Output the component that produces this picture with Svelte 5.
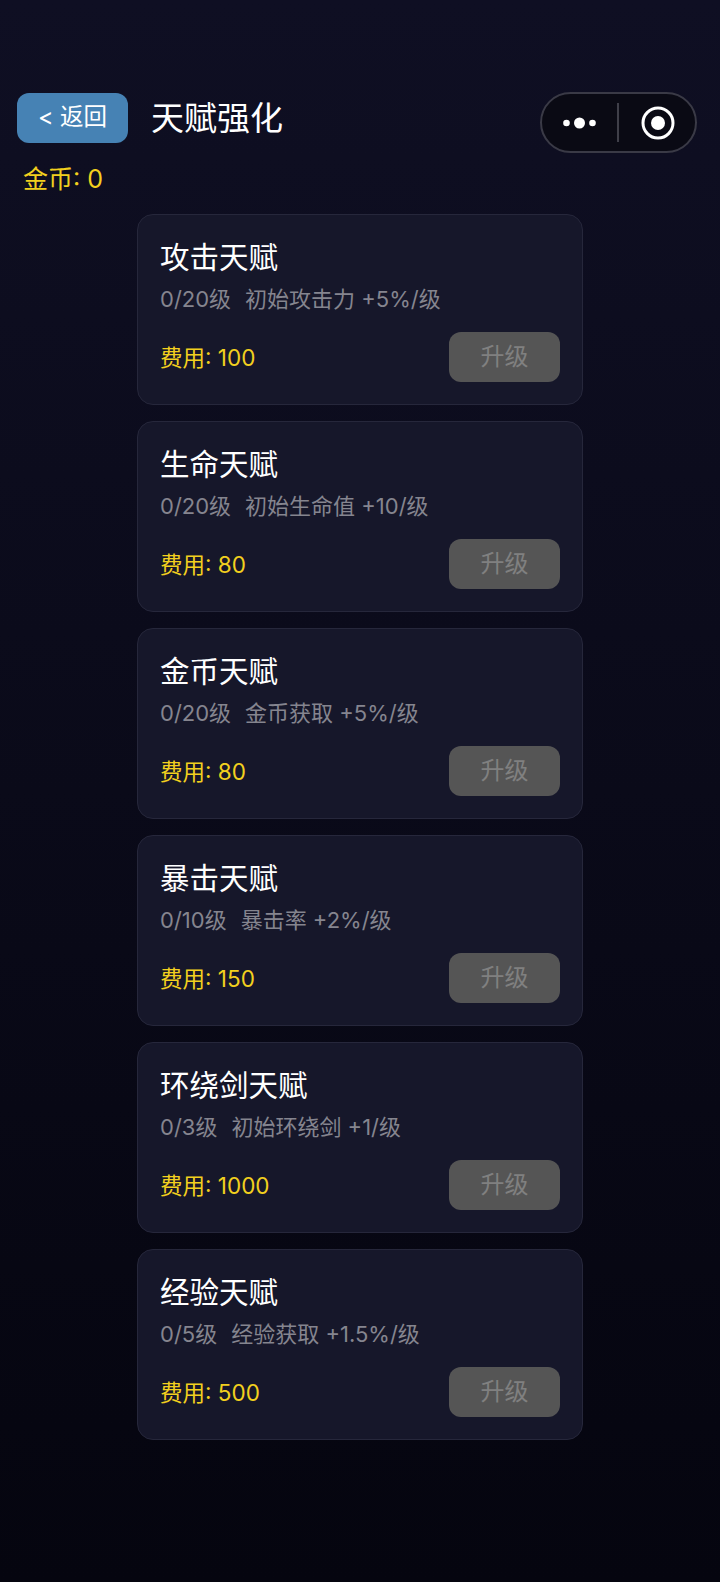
<script>
  const talents = [
    { name: '攻击天赋', level: '0/20级', desc: '初始攻击力 +5%/级', cost: 100 },
    { name: '生命天赋', level: '0/20级', desc: '初始生命值 +10/级', cost: 80 },
    { name: '金币天赋', level: '0/20级', desc: '金币获取 +5%/级', cost: 80 },
    { name: '暴击天赋', level: '0/10级', desc: '暴击率 +2%/级', cost: 150 },
    { name: '环绕剑天赋', level: '0/3级', desc: '初始环绕剑 +1/级', cost: 1000 },
    { name: '经验天赋', level: '0/5级', desc: '经验获取 +1.5%/级', cost: 500 }
  ];
</script>

<div class="page">
  <div class="capsule">
    <svg class="dots" width="36" height="14" viewBox="0 0 36 14">
      <circle cx="4.5" cy="7" r="3.3" fill="#fff" />
      <circle cx="17.5" cy="7" r="5.5" fill="#fff" />
      <circle cx="30.5" cy="7" r="3.3" fill="#fff" />
    </svg>
    <span class="divider"></span>
    <svg class="target" width="34" height="34" viewBox="0 0 34 34">
      <circle cx="17" cy="17" r="15" fill="none" stroke="#fff" stroke-width="3" />
      <circle cx="17" cy="17" r="7" fill="#fff" />
    </svg>
  </div>

  <header class="header">
    <button class="back">&lt; 返回</button>
    <h1 class="title">天赋强化</h1>
  </header>
  <div class="coins">金币: 0</div>

  <div class="list">
    {#each talents as t}
      <section class="card">
        <div class="name">{t.name}</div>
        <div class="info"><span>{t.level}</span><span>{t.desc}</span></div>
        <div class="row">
          <span class="cost">费用: {t.cost}</span>
          <button class="upgrade">升级</button>
        </div>
      </section>
    {/each}
  </div>
</div>

<style>
  :global(body) {
    margin: 0;
    background: #05050f;
  }
  .page {
    position: relative;
    box-sizing: border-box;
    width: 720px;
    height: 1582px;
    padding: 93px 0 0 17px;
    overflow: hidden;
    background: linear-gradient(180deg, #0f0f23 0%, #05050f 100%);
    font-family: Inter, "Noto Sans CJK SC", sans-serif;
  }
  .capsule {
    position: absolute;
    top: 92px;
    left: 540px;
    box-sizing: border-box;
    width: 157px;
    height: 61px;
    display: flex;
    align-items: center;
    border: 2px solid #3a3a46;
    border-radius: 31px;
    background: #0a0a14;
  }
  .dots { margin-left: 20px; }
  .divider {
    width: 2px;
    height: 39px;
    margin-left: 19px;
    background: #3f3f49;
  }
  .target { margin-left: 22px; }
  .header {
    display: flex;
    align-items: center;
    height: 50px;
  }
  .back {
    width: 111px;
    height: 50px;
    padding: 0 0 6px;
    border: 0;
    border-radius: 12px;
    background: #4682b4;
    color: #fff;
    font: 23.5px Inter, "Noto Sans CJK SC", sans-serif;
  }
  .title {
    margin: 0 0 0 23px;
    color: #fff;
    font-size: 33px;
    font-weight: 400;
    line-height: 50px;
  }
  .coins {
    margin: 19px 0 0 6px;
    color: #f2d01e;
    font-size: 25px;
    line-height: 34px;
  }
  .list {
    display: flex;
    flex-direction: column;
    gap: 16px;
    width: 446px;
    margin: 18px 0 0 120px;
  }
  .card {
    box-sizing: border-box;
    height: 191px;
    padding: 22px 22px 0;
    border: 1px solid #26273b;
    border-radius: 16px;
    background: #16172a;
  }
  .name {
    color: #fff;
    font-size: 29.5px;
    font-weight: 400;
    line-height: 40px;
  }
  .info {
    display: flex;
    gap: 14px;
    margin-top: 6px;
    color: #85858f;
    font-size: 22px;
    line-height: 32px;
  }
  .row {
    display: flex;
    align-items: center;
    justify-content: space-between;
    margin-top: 17px;
  }
  .cost {
    padding-bottom: 2px;
    color: #f2d01e;
    font-size: 22.5px;
  }
  .upgrade {
    width: 111px;
    height: 50px;
    padding: 0 0 6px;
    border: 0;
    border-radius: 12px;
    background: #555555;
    color: #808080;
    font: 24px Inter, "Noto Sans CJK SC", sans-serif;
  }
</style>
